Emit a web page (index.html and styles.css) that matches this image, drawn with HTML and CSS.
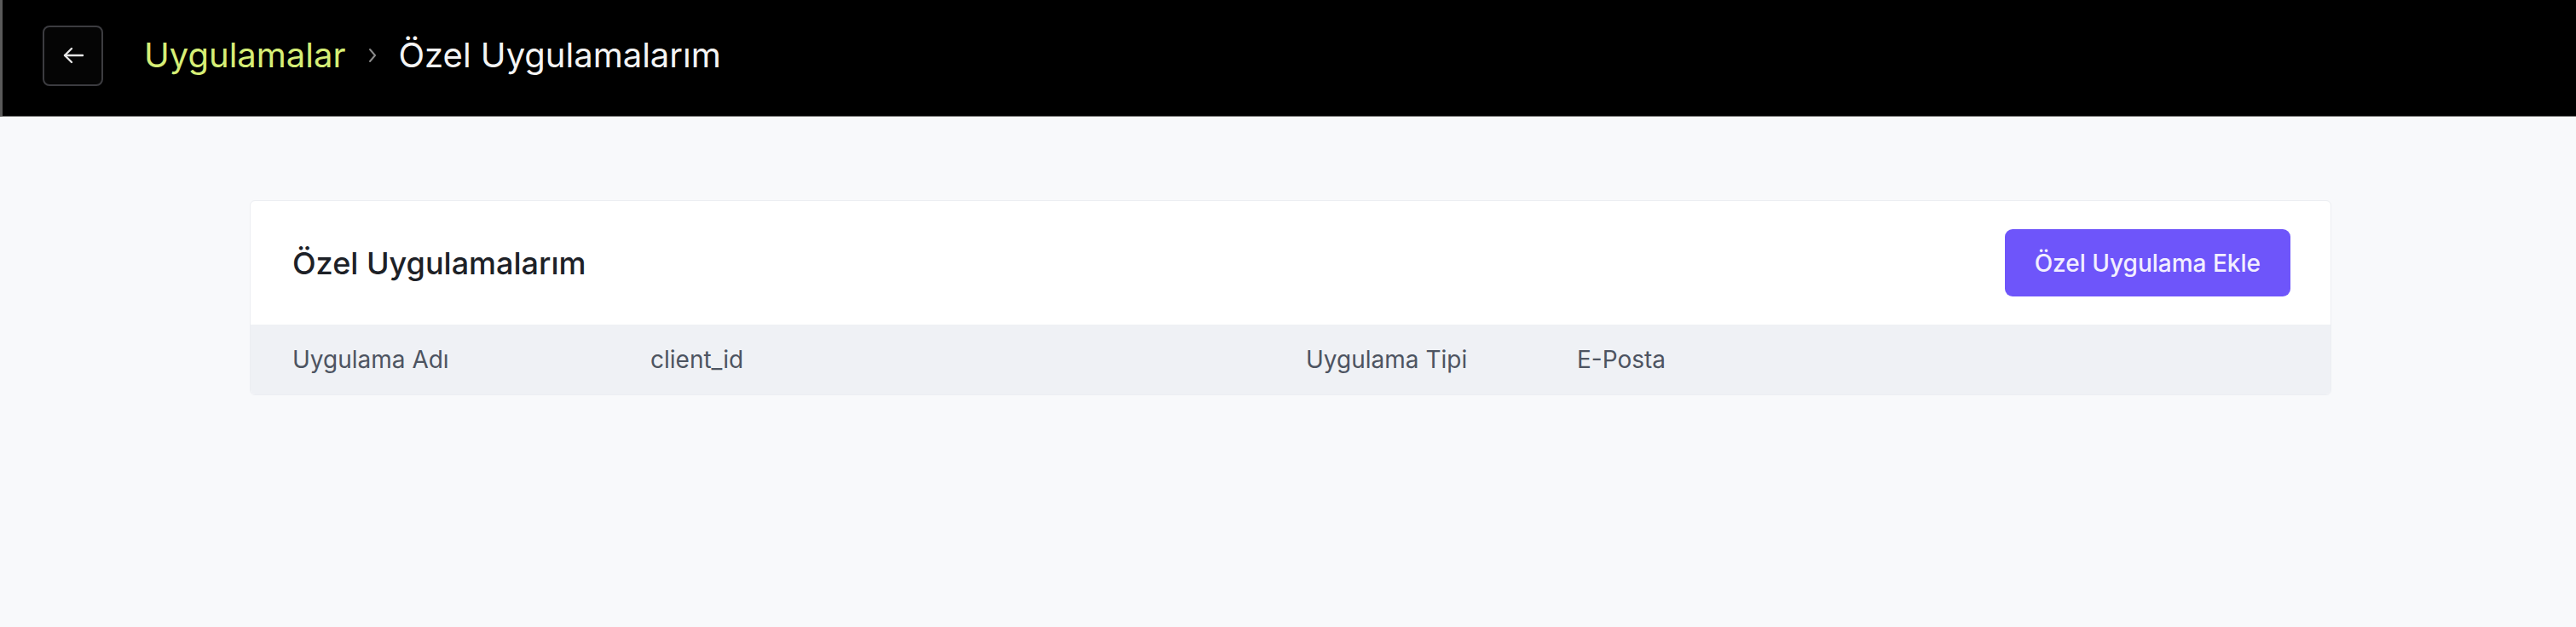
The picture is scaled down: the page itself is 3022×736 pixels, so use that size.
FILE: index.html
```html
<!DOCTYPE html>
<html lang="tr">
<head>
<meta charset="utf-8">
<title>Özel Uygulamalarım</title>
<link rel="stylesheet" href="styles.css">
</head>
<body>
<header class="topbar">
  <button class="back-btn" aria-label="Geri">
    <svg width="26" height="22" viewBox="0 0 26 22" fill="none" stroke="#e6e6e6" stroke-width="2.4" stroke-linecap="round" stroke-linejoin="round"><path d="M24 11H3"/><path d="M11 3L3 11l8 8"/></svg>
  </button>
  <nav class="crumbs">
    <a class="crumb-link">Uygulamalar</a>
    <svg class="crumb-sep" width="12" height="20" viewBox="0 0 12 20" fill="none" stroke="#8b8b8b" stroke-width="2" stroke-linecap="round" stroke-linejoin="round"><path d="M3 3l6 7-6 7"/></svg>
    <span class="crumb-current">Özel Uygulamalarım</span>
  </nav>
</header>
<main class="page">
  <section class="card">
    <div class="card-head">
      <h1 class="card-title">Özel Uygulamalarım</h1>
      <button class="primary-btn">Özel Uygulama Ekle</button>
    </div>
    <div class="table-head">
      <div class="th">Uygulama Adı</div>
      <div class="th">client_id</div>
      <div class="th">Uygulama Tipi</div>
      <div class="th">E-Posta</div>
    </div>
  </section>
</main>
</body>
</html>
```
FILE: styles.css
```css
* { box-sizing: border-box; }
html, body { margin: 0; padding: 0; }
body {
  background: #f8f9fb;
  font-family: Inter, "Noto Sans", "Liberation Sans", sans-serif;
  min-height: 736px;
}
.topbar {
  height: 137px;
  background: #000;
  border-left: 3px solid #5a5a5a;
  border-bottom: 1px solid #6a6a6a;
  display: flex;
  align-items: center;
  padding-left: 47px;
  gap: 48px;
}
.back-btn {
  width: 71px;
  height: 71px;
  margin-top: -6px;
  background: #050505;
  border: 2px solid #3c3c40;
  border-radius: 8px;
  display: flex;
  align-items: center;
  justify-content: center;
  padding: 0;
}
.crumbs {
  display: flex;
  align-items: center;
  gap: 25px;
  margin-top: -8px;
}
.crumb-link {
  color: #d6ee76;
  font-size: 40px;
  font-weight: 400;
}
.crumb-current {
  color: #f4f4f4;
  font-size: 40px;
  font-weight: 400;
}
.crumb-sep { margin-top: 2px; }
.page {
  padding: 98px 287px 0 293px;
}
.card {
  background: #fff;
  border: 1px solid #eceef2;
  border-radius: 6px;
  overflow: hidden;
}
.card-head {
  height: 145px;
  display: flex;
  align-items: center;
  justify-content: space-between;
  padding: 0 47px 0 49px;
}
.card-title {
  margin: 0;
  font-size: 36px;
  font-weight: 500;
  color: #1d2127;
}
.primary-btn {
  height: 79px;
  padding: 0 35px;
  background: #6e55fa;
  color: #f3efff;
  border: none;
  border-radius: 9px;
  font-family: inherit;
  font-size: 28px;
  font-weight: 500;
}
.table-head {
  background: #eff1f5;
  height: 82px;
  display: grid;
  grid-template-columns: 420px 769px 318px 1fr;
  align-items: center;
  padding-left: 49px;
}
.th {
  font-size: 28px;
  color: #4d5461;
  font-weight: 400;
}
```
